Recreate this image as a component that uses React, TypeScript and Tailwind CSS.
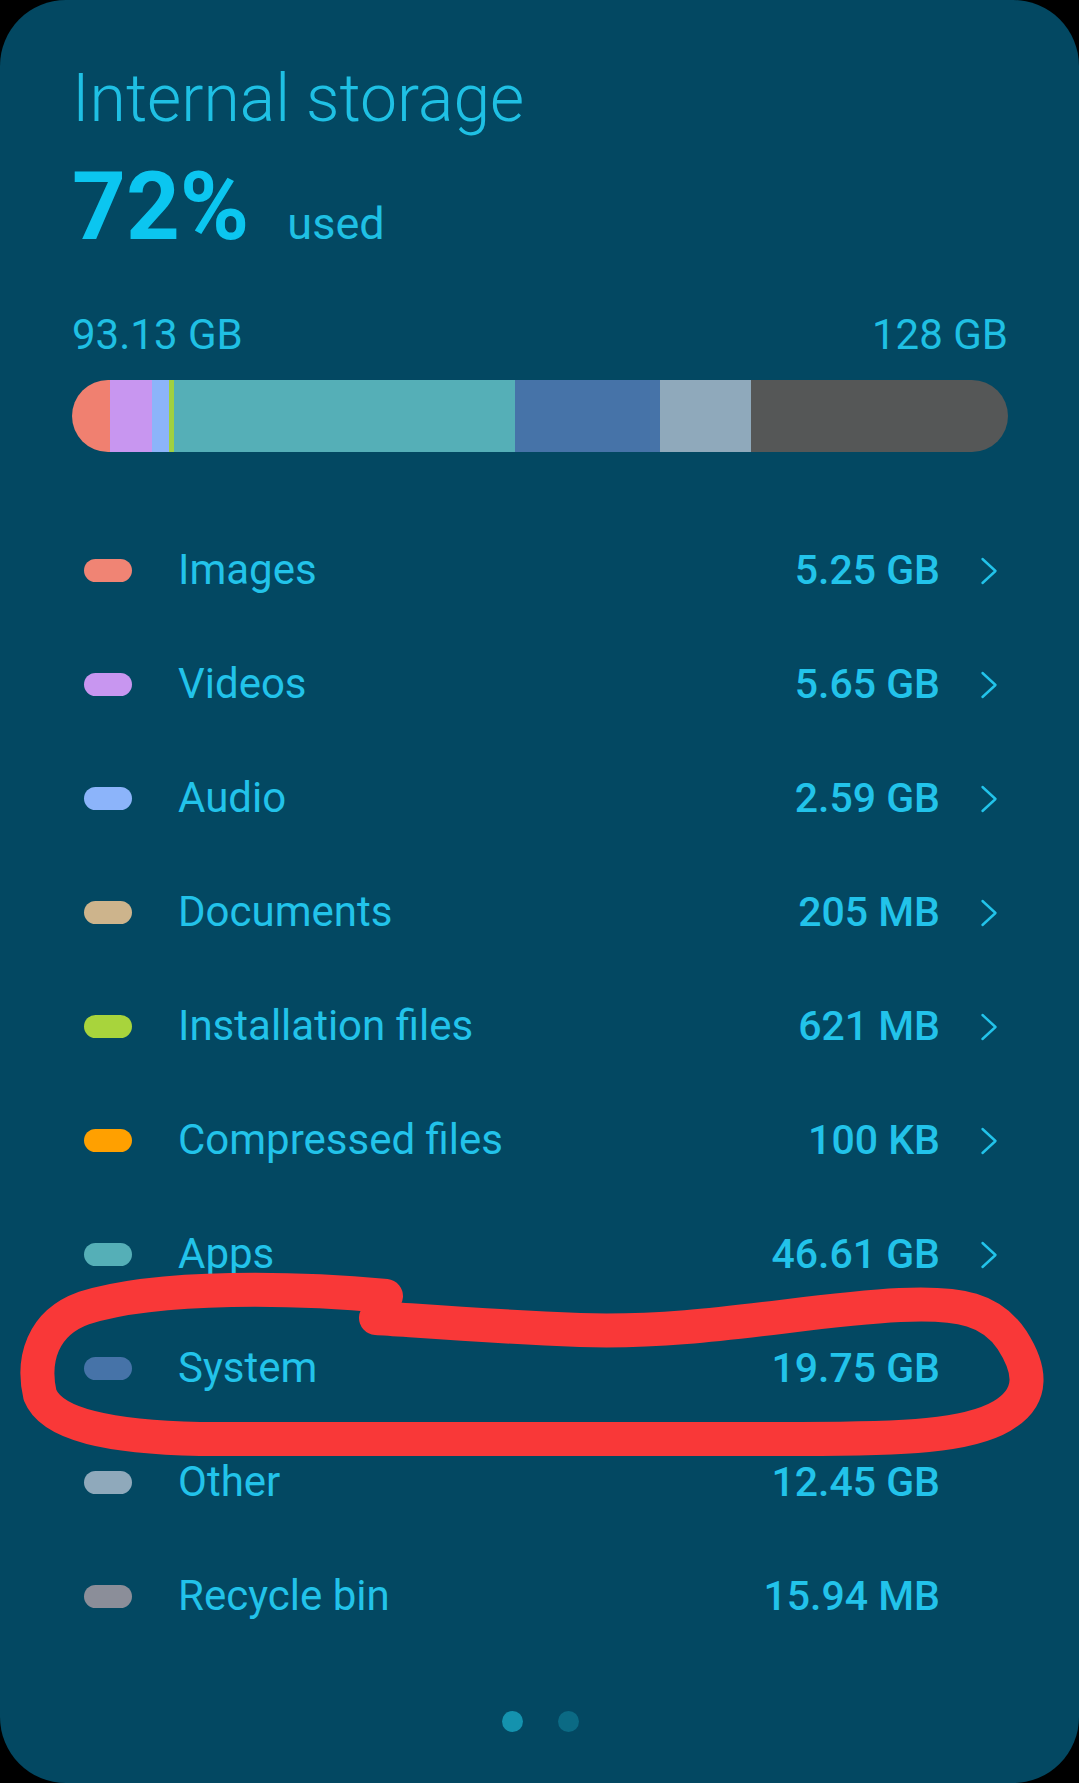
import React from "react";

type Item = { name: string; value: string; color: string; chevron: boolean };

const items: Item[] = [
  { name: "Images", value: "5.25 GB", color: "bg-[#f08474]", chevron: true },
  { name: "Videos", value: "5.65 GB", color: "bg-[#c896f0]", chevron: true },
  { name: "Audio", value: "2.59 GB", color: "bg-[#8cb4fa]", chevron: true },
  { name: "Documents", value: "205 MB", color: "bg-[#cdb48c]", chevron: true },
  { name: "Installation files", value: "621 MB", color: "bg-[#a8d43c]", chevron: true },
  { name: "Compressed files", value: "100 KB", color: "bg-[#ffa000]", chevron: true },
  { name: "Apps", value: "46.61 GB", color: "bg-[#55afb7]", chevron: true },
  { name: "System", value: "19.75 GB", color: "bg-[#4673a8]", chevron: false },
  { name: "Other", value: "12.45 GB", color: "bg-[#8fa9bb]", chevron: false },
  { name: "Recycle bin", value: "15.94 MB", color: "bg-[#8b8e99]", chevron: false },
];

function Chevron() {
  return (
    <svg width="18" height="28" viewBox="0 0 18 28" fill="none">
      <path d="M2.5 2 L15.5 14 L2.5 26" stroke="#22c3ea" strokeWidth="2.4" strokeLinecap="round" strokeLinejoin="round" />
    </svg>
  );
}

export default function App() {
  return (
    <div className="w-[1079px] h-[1783px] bg-black" style={{ fontFamily: "Roboto, 'Noto Sans', sans-serif" }}>
      <div className="relative w-full h-full bg-[#034862] rounded-[66px] pl-[72px] pr-[71px] pt-[61px] text-[#22c3ea]">
        <div className="text-[66px] leading-[76px] font-light text-[#1fc0e4]">Internal storage</div>
        <div className="mt-[23px] flex items-baseline gap-[38px]">
          <span className="text-[94px] leading-[94px] font-bold text-[#0bc6f0]">72%</span>
          <span className="text-[45px] leading-[50px] font-normal text-[#1fc0e4]">used</span>
        </div>
        <div className="mt-[57px] flex justify-between text-[42px] leading-[48px] text-[#1fc0e4]">
          <span>93.13 GB</span>
          <span>128 GB</span>
        </div>
        <div className="mt-[21px] h-[72px] w-full rounded-full overflow-hidden flex">
          <div className="w-[38px] bg-[#f08070]" />
          <div className="w-[42px] bg-[#c896f0]" />
          <div className="w-[17px] bg-[#8cb4fa]" />
          <div className="w-[5px] bg-[#a0d040]" />
          <div className="w-[341px] bg-[#55afb7]" />
          <div className="w-[145px] bg-[#4673a8]" />
          <div className="w-[91px] bg-[#8fa9bb]" />
          <div className="flex-1 bg-[#555757]" />
        </div>
        <div className="mt-[61px] flex flex-col">
          {items.map((it) => (
            <div key={it.name} className="h-[114px] flex items-center">
              <div className={`ml-[12px] w-[48px] h-[23px] rounded-full ${it.color}`} />
              <div className="ml-[46px] flex-1 text-[42px] leading-[50px] font-normal">{it.name}</div>
              <div className="text-[41px] leading-[50px] font-medium">{it.value}</div>
              <div className="w-[68px] pl-[40px] flex items-center pt-[2px]">{it.chevron ? <Chevron /> : null}</div>
            </div>
          ))}
        </div>
        <div className="mt-[58px] flex justify-center gap-[35px]">
          <div className="w-[21px] h-[21px] rounded-full bg-[#1492ae]" />
          <div className="w-[21px] h-[21px] rounded-full bg-[#0b6a84]" />
        </div>
        <svg className="absolute inset-0 w-full h-full pointer-events-none" viewBox="0 0 1079 1783" fill="none">
          <path
            d="M386 1296 C300 1288 160 1284 84 1308 C42 1323 32 1360 40 1395 C52 1425 110 1437 200 1439 L800 1439 C905 1439 968 1436 1002 1416 C1036 1396 1030 1368 1012 1340 C992 1310 962 1302 900 1305 C800 1310 700 1334 580 1330 C480 1326 410 1320 376 1318"
            stroke="#f93838"
            strokeWidth="34"
            strokeLinecap="round"
            strokeLinejoin="round"
          />
        </svg>
      </div>
    </div>
  );
}
